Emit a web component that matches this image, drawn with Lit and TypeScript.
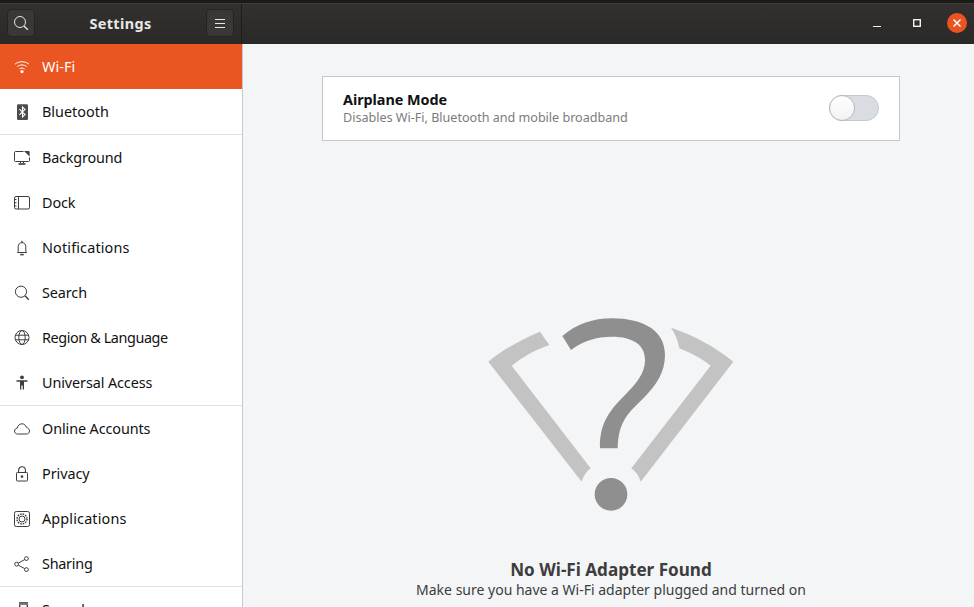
import { LitElement, html, css, svg } from "lit";
import { customElement } from "lit/decorators.js";
import { styleMap } from "lit/directives/style-map.js";

const S = (c: unknown) => html`<svg class="ic" viewBox="0 0 16 16" width="16" height="16" fill="none" stroke="currentColor" stroke-width="1">${c}</svg>`;

const icons: Record<string, unknown> = {
  wifi: S(svg`<path d="M1 5.2C5 1.9 11 1.9 15 5.2" /><path d="M3.2 7.6C6 5.4 10 5.4 12.8 7.6" /><path d="M5.4 10C7 8.8 9 8.8 10.6 10" /><circle cx="8" cy="12.6" r="1.6" fill="currentColor" stroke="none"/>`),
  bt: S(svg`<rect x="3" y="0.2" width="11" height="15.8" rx="1.2" fill="#4d4d4d" stroke="none"/><path d="M5.4 5.2L11 10.6L8.5 13V3L11 5.4L5.4 10.8" stroke="#fff" stroke-width="1.1"/>`),
  bg: S(svg`<path d="M15.5 7.5V10.5a1 1 0 0 1-1 1H1.5a1 1 0 0 1-1-1V2.5a1 1 0 0 1 1-1H9.5"/><path d="M10 1h4.6a1 1 0 0 1 1 1V6.6Z" fill="currentColor" stroke="none"/><path d="M6.5 11.5V13.5M9.5 11.5V13.5" /><path d="M4.5 14h7" stroke-width="1.6"/>`),
  dock: S(svg`<rect x="0.5" y="1.5" width="15" height="12.5" rx="1.5"/><path d="M4.5 1.5V14"/><path d="M0.5 4.5H2.5M0.5 7.7H2.5M0.5 11H2.5"/>`),
  bell: S(svg`<path d="M3.5 12.5H12.5L11.8 11.2V6.6C11.8 4.4 10.2 2.6 8 2.6S4.2 4.4 4.2 6.6V11.2Z"/><path d="M8 .8V2.6" stroke-width="1.2"/><path d="M6.3 14.6H9.7" stroke-width="1.5"/>`),
  search: S(svg`<circle cx="7" cy="6.7" r="5.6"/><path d="M11 10.8L14.8 14.8" stroke-width="1.3"/>`),
  globe: S(svg`<circle cx="8" cy="7.5" r="7"/><ellipse cx="8" cy="7.5" rx="3.2" ry="7"/><path d="M1.4 5.2H14.6M1.4 9.8H14.6"/>`),
  access: S(svg`<circle cx="8" cy="2.3" r="1.9" fill="currentColor" stroke="none"/><path d="M2.5 5.2H13.5V6.8H10V14.4H8.7V10.5H7.3V14.4H6V6.8H2.5Z" fill="currentColor" stroke="none"/>`),
  cloud: S(svg`<path d="M3.6 13C1.8 13 .5 11.7 .5 10.1S1.7 7.4 3.2 7.2C3.6 4.6 5.6 2.8 8 2.8C10.2 2.8 11.9 4.3 12.4 6.5C14.2 6.8 15.5 8.2 15.5 10S14.2 13 12.4 13Z"/>`),
  lock: S(svg`<rect x="2.5" y="6.5" width="11" height="8.5" rx=".8"/><path d="M4.6 6.5V4.2C4.6 2.2 6.1 .8 8 .8S11.4 2.2 11.4 4.2V6.5" stroke-width="1.1"/><circle cx="8" cy="10.6" r="1.3" fill="currentColor" stroke="none"/>`),
  apps: S(svg`<rect x=".5" y=".5" width="15" height="15" rx="1.8"/><circle cx="8" cy="8" r="3"/><circle cx="8" cy="8" r="5" stroke-width="1.4" stroke-dasharray="1.6 1.02"/>`),
  share: S(svg`<circle cx="2.6" cy="8.2" r="1.9"/><circle cx="12.4" cy="2.6" r="1.9"/><circle cx="12.4" cy="13.6" r="1.9"/><path d="M4.3 7.2L10.7 3.6M4.3 9.2L10.7 12.6"/>`),
  sound: S(svg`<path d="M5.7 14V.6H13.3V14" stroke-width="1.4"/><path d="M5 .4H14V3H5Z" fill="#777" stroke="none"/>`),
};

type Row = { id: string; label: string; track: number; active?: boolean; sep?: boolean };
const rows: Row[] = [
  { id: "wifi", label: "Wi-Fi", track: 0.1, active: true },
  { id: "bt", label: "Bluetooth", track: 0, sep: true },
  { id: "bg", label: "Background", track: -0.18 },
  { id: "dock", label: "Dock", track: -0.1 },
  { id: "bell", label: "Notifications", track: 0.15 },
  { id: "search", label: "Search", track: -0.1 },
  { id: "globe", label: "Region & Language", track: -0.4 },
  { id: "access", label: "Universal Access", track: -0.1, sep: true },
  { id: "cloud", label: "Online Accounts", track: -0.1 },
  { id: "lock", label: "Privacy", track: -0.05 },
  { id: "apps", label: "Applications", track: 0.15 },
  { id: "share", label: "Sharing", track: -0.25, sep: true },
  { id: "sound", label: "Sound", track: -0.1 },
];

@customElement("app-root")
export class AppRoot extends LitElement {
  static styles = css`
    :host {
      display: flex;
      flex-direction: column;
      width: 974px;
      height: 607px;
      overflow: hidden;
      font-family: "Noto Sans", sans-serif;
      font-size: 14.4px;
      background: #f4f5f7;
      color: #111;
    }
    .strip { height: 3px; background: #1b191a; flex: none; }
    .bar {
      height: 41px;
      flex: none;
      display: flex;
      background: linear-gradient(#33312f, #2b2927);
      border-top: 1px solid #3f3d3b;
      box-sizing: border-box;
    }
    .bar-left {
      width: 242px;
      flex: none;
      box-sizing: border-box;
      border-right: 1px solid #1e1d1c;
      display: flex;
      align-items: center;
      justify-content: space-between;
      padding: 0 7px 2px;
      color: #f0f0f0;
    }
    .title { font-weight: 700; font-size: 14.4px; letter-spacing: 0.4px; color: #e8e8e8; }
    .hbtn {
      width: 28px;
      height: 28px;
      box-sizing: border-box;
      border-radius: 4px;
      background: #3a3836;
      border: 1px solid #252423;
      display: flex;
      align-items: center;
      justify-content: center;
      color: #e6e6e6;
    }
    .bar-right {
      flex: 1;
      display: flex;
      align-items: center;
      justify-content: flex-end;
      padding: 0 7px 2px 0;
      gap: 0;
      color: #f2f2f2;
    }
    .wbtn { width: 40px; display: flex; justify-content: center; align-items: center; }
    .wbtn.close { width: 20px; height: 20px; margin-left: 10px; border-radius: 50%; background: #e95420; }
    .body { flex: 1; display: flex; min-height: 0; }
    .side {
      width: 243px;
      flex: none;
      box-sizing: border-box;
      background: #fff;
      border-right: 1px solid #c6c9cf;
      overflow: hidden;
    }
    .row {
      height: 45px;
      box-sizing: border-box;
      display: flex;
      align-items: center;
      gap: 12px;
      padding-left: 14px;
      color: #111;
    }
    .row .ic { color: #3d3d3d; flex: none; }
    .row.active { background: #eb5522; color: #fff; }
    .row.active .ic { color: #fff; }
    .row.sep { height: 46px; border-bottom: 1px solid #e0e1e3; }
    .main { flex: 1; padding: 32px 0 0 79px; min-width: 0; }
    .col { width: 578px; display: flex; flex-direction: column; align-items: center; }
    .card {
      align-self: stretch;
      height: 65px;
      box-sizing: border-box;
      background: #fff;
      border: 1px solid #c3c7cf;
      display: flex;
      align-items: center;
      justify-content: space-between;
      padding: 0 20px;
    }
    .card-text { display: flex; flex-direction: column; }
    .card-title { font-weight: 700; font-size: 14.4px; line-height: 18px; color: #111; letter-spacing: -0.05px; }
    .card-sub { font-size: 12.6px; line-height: 17px; color: #7b7b7b; letter-spacing: -0.015px; }
    .switch {
      width: 50px;
      height: 26px;
      margin-bottom: 2px;
      box-sizing: border-box;
      border-radius: 13px;
      background: #d9dce1;
      border: 1px solid #c3c7cf;
      display: flex;
      align-items: center;
    }
    .knob {
      width: 26px;
      height: 26px;
      margin-left: -1px;
      box-sizing: border-box;
      border-radius: 50%;
      background: linear-gradient(#fff, #f2f2f2);
      border: 1px solid #b5b9bf;
    }
    .art { display: block; margin-top: 159px; flex: none; }
    .h { font-weight: 700; font-size: 17.1px; line-height: 22px; color: #3d3d3d; margin-top: 39px; white-space: nowrap; }
    .p { font-size: 14px; line-height: 18px; color: #3d3d3d; white-space: nowrap; }
  `;

  render() {
    return html`
      <div class="strip"></div>
      <div class="bar">
        <div class="bar-left">
          <div class="hbtn">
            <svg width="16" height="16" viewBox="0 0 16 16" fill="none" stroke="currentColor"><circle cx="7" cy="7" r="5.5"/><path d="M11 11L14.8 14.8" stroke-width="1.4"/></svg>
          </div>
          <span class="title">Settings</span>
          <div class="hbtn">
            <svg width="12" height="12" viewBox="0 0 12 12" fill="none" stroke="currentColor"><path d="M1 2.5H11M1 6.5H11M1 10.5H11"/></svg>
          </div>
        </div>
        <div class="bar-right">
          <div class="wbtn"><svg width="10" height="10" viewBox="0 0 10 10" stroke="currentColor"><path d="M1 8.5H9"/></svg></div>
          <div class="wbtn"><svg width="10" height="10" viewBox="0 0 10 10" fill="none" stroke="currentColor" stroke-width="1.4"><rect x="1.7" y="1.7" width="6.6" height="6.6"/></svg></div>
          <div class="wbtn close"><svg width="10" height="10" viewBox="0 0 10 10" stroke="#fff" stroke-width="1.5"><path d="M1.5 1.5L8.5 8.5M8.5 1.5L1.5 8.5"/></svg></div>
        </div>
      </div>
      <div class="body">
        <nav class="side">
          ${rows.map(
            (r) => html`<div class="row ${r.active ? "active" : ""} ${r.sep ? "sep" : ""}">${icons[r.id]}<span style=${styleMap({ letterSpacing: `${r.track}px` })}>${r.label}</span></div>`
          )}
        </nav>
        <main class="main">
          <div class="col">
            <section class="card">
              <div class="card-text">
                <span class="card-title">Airplane Mode</span>
                <span class="card-sub">Disables Wi-Fi, Bluetooth and mobile broadband</span>
              </div>
              <div class="switch"><div class="knob"></div></div>
            </section>
            <svg class="art" width="280" height="220" viewBox="3 0 840 660">
              <path fill="#c3c3c3" d="M55 185C100 148 155 118 210 95L238 135C195 150 160 170 125 197L362 505C348 515 340 530 335 545Z"/>
              <path fill="#c3c3c3" d="M603 83C670 105 735 140 790 185L512 545C507 528 498 515 484 505L722 197C695 175 660 158 628 145C624 122 615 100 603 83Z"/>
              <path fill="#8f8f8f" d="M277 108C320 72 370 55 425 55C525 55 585 95 585 165C585 215 560 255 520 295C480 335 445 360 443 445H390C388 375 415 335 460 290C500 250 525 220 525 180C525 135 490 110 425 110C380 110 340 122 303 150Z"/>
              <circle fill="#8f8f8f" cx="423" cy="583" r="49"/>
            </svg>
            <div class="h">No Wi-Fi Adapter Found</div>
            <div class="p">Make sure you have a Wi-Fi adapter plugged and turned on</div>
          </div>
        </main>
      </div>
    `;
  }
}
